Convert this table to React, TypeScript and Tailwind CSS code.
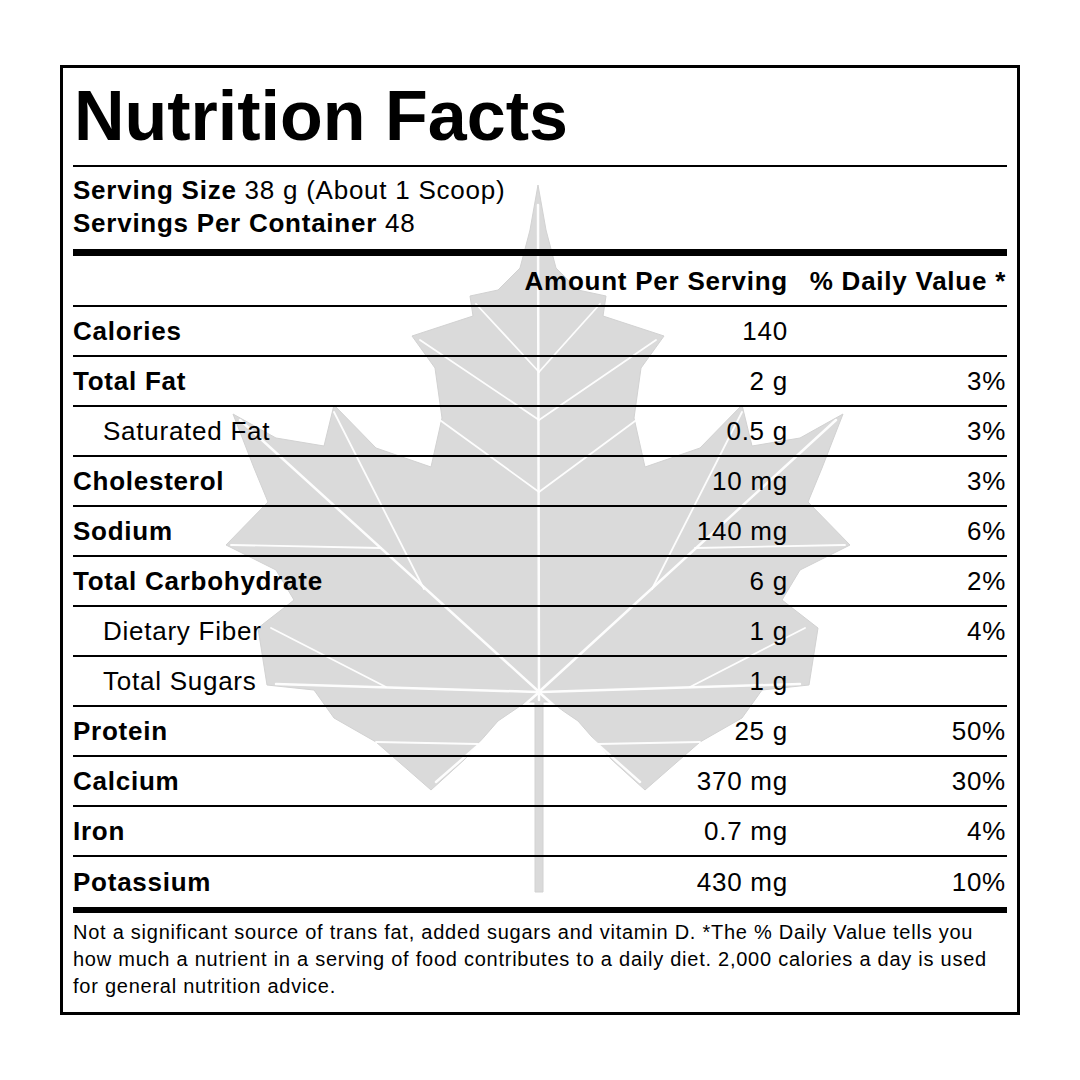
import React from "react";

type Row = { name: string; amount: string; dv: string; bold: boolean };

const rows: Row[] = [
  { name: "Calories", amount: "140", dv: "", bold: true },
  { name: "Total Fat", amount: "2 g", dv: "3%", bold: true },
  { name: "Saturated Fat", amount: "0.5 g", dv: "3%", bold: false },
  { name: "Cholesterol", amount: "10 mg", dv: "3%", bold: true },
  { name: "Sodium", amount: "140 mg", dv: "6%", bold: true },
  { name: "Total Carbohydrate", amount: "6 g", dv: "2%", bold: true },
  { name: "Dietary Fiber", amount: "1 g", dv: "4%", bold: false },
  { name: "Total Sugars", amount: "1 g", dv: "", bold: false },
  { name: "Protein", amount: "25 g", dv: "50%", bold: true },
  { name: "Calcium", amount: "370 mg", dv: "30%", bold: true },
  { name: "Iron", amount: "0.7 mg", dv: "4%", bold: true },
  { name: "Potassium", amount: "430 mg", dv: "10%", bold: true },
];

const rightHalf: [number, number][] = [
  [538, 185],
  [546, 230],
  [556, 268],
  [578, 290],
  [606, 296],
  [603, 316],
  [664, 336],
  [641, 368],
  [634, 418],
  [645, 467],
  [700, 448],
  [742, 405],
  [752, 446],
  [800, 438],
  [843, 414],
  [822, 468],
  [808, 502],
  [850, 545],
  [800, 570],
  [782, 600],
  [818, 628],
  [809, 685],
  [762, 690],
  [742, 718],
  [700, 742],
  [645, 790],
  [612, 760],
  [578, 721],
  [550, 702],
];

function leafPath(): string {
  const left = [...rightHalf]
    .slice(1)
    .reverse()
    .map(([x, y]) => [1076 - x, y] as [number, number]);
  const pts = [...rightHalf, [543, 702], [543, 892], [535, 892], [535, 702], ...left] as [number, number][];
  return "M" + pts.map(([x, y]) => `${x},${y}`).join(" L") + " Z";
}

function Leaf() {
  const veins = [
    "M539,700 L538,205",
    "M541,690 L836,420",
    "M537,690 L240,420",
    "M541,692 L800,684",
    "M537,692 L276,684",
    "M541,694 L640,782",
    "M537,694 L436,782",
    "M539,492 L650,410",
    "M539,492 L426,410",
    "M539,420 L656,340",
    "M539,420 L420,340",
    "M539,372 L600,304",
    "M539,372 L476,304",
    "M695,548 L845,545",
    "M381,548 L231,545",
    "M652,589 L742,412",
    "M424,589 L334,412",
    "M690,687 L805,628",
    "M386,687 L271,628",
    "M598,744 L700,742",
    "M478,744 L376,742",
  ];
  return (
    <svg
      className="absolute inset-0 h-full w-full"
      viewBox="63 68 954 944"
      preserveAspectRatio="none"
      aria-hidden="true"
    >
      <path d={leafPath()} fill="#dadada" stroke="#d2d2d2" strokeWidth="1" strokeLinejoin="round" />
      {veins.map((d, i) => (
        <path key={i} d={d} stroke="#ffffff" strokeWidth={i < 7 ? 2.5 : 1.8} strokeLinecap="round" fill="none" opacity="0.95" />
      ))}
    </svg>
  );
}

export default function App() {
  return (
    <div className="w-[1080px] h-[1080px] bg-white pt-[65px] pl-[60px] text-black font-['Liberation_Sans',Arial,sans-serif]">
      <div className="relative w-[960px] h-[950px] border-[3px] border-black">
        <Leaf />
        <div className="relative flex flex-col px-[10px]">
          <div className="h-[97px] text-[70px] leading-[97px] font-bold pl-[1px]">Nutrition Facts</div>
          <div className="h-[2px] bg-black" />
          <div className="h-[82px] pt-[7px] text-[26px] leading-[33px] tracking-[0.75px]">
            <div>
              <span className="font-bold">Serving Size</span> 38 g (About 1 Scoop)
            </div>
            <div>
              <span className="font-bold">Servings Per Container</span> 48
            </div>
          </div>
          <div className="h-[7px] bg-black" />
          <div className="h-[49px] flex items-center text-[26px] leading-[30px] tracking-[0.75px] font-bold">
            <div className="flex-1" />
            <div className="text-right">Amount Per Serving</div>
            <div className="w-[219px] text-right pr-[1px]">% Daily Value *</div>
          </div>
          <div className="h-[2px] bg-black" />
          {rows.map((r, i) => (
            <React.Fragment key={r.name}>
              <div
                className={
                  "flex items-center text-[26px] leading-[30px] tracking-[0.75px] " +
                  (i === rows.length - 1 ? "h-[50px]" : "h-[48px]")
                }
              >
                <div className={"flex-1 " + (r.bold ? "font-bold" : "pl-[30px]")}>{r.name}</div>
                <div className="text-right">{r.amount}</div>
                <div className="w-[219px] text-right pr-[1px]">{r.dv}</div>
              </div>
              {i < rows.length - 1 && <div className="h-[2px] bg-black" />}
            </React.Fragment>
          ))}
          <div className="h-[6px] bg-black" />
          <div className="pt-[6px] text-[20px] leading-[27px] tracking-[0.75px]">
            Not a significant source of trans fat, added sugars and vitamin D. *The % Daily Value tells you
            <br />
            how much a nutrient in a serving of food contributes to a daily diet. 2,000 calories a day is used
            <br />
            for general nutrition advice.
          </div>
        </div>
      </div>
    </div>
  );
}
